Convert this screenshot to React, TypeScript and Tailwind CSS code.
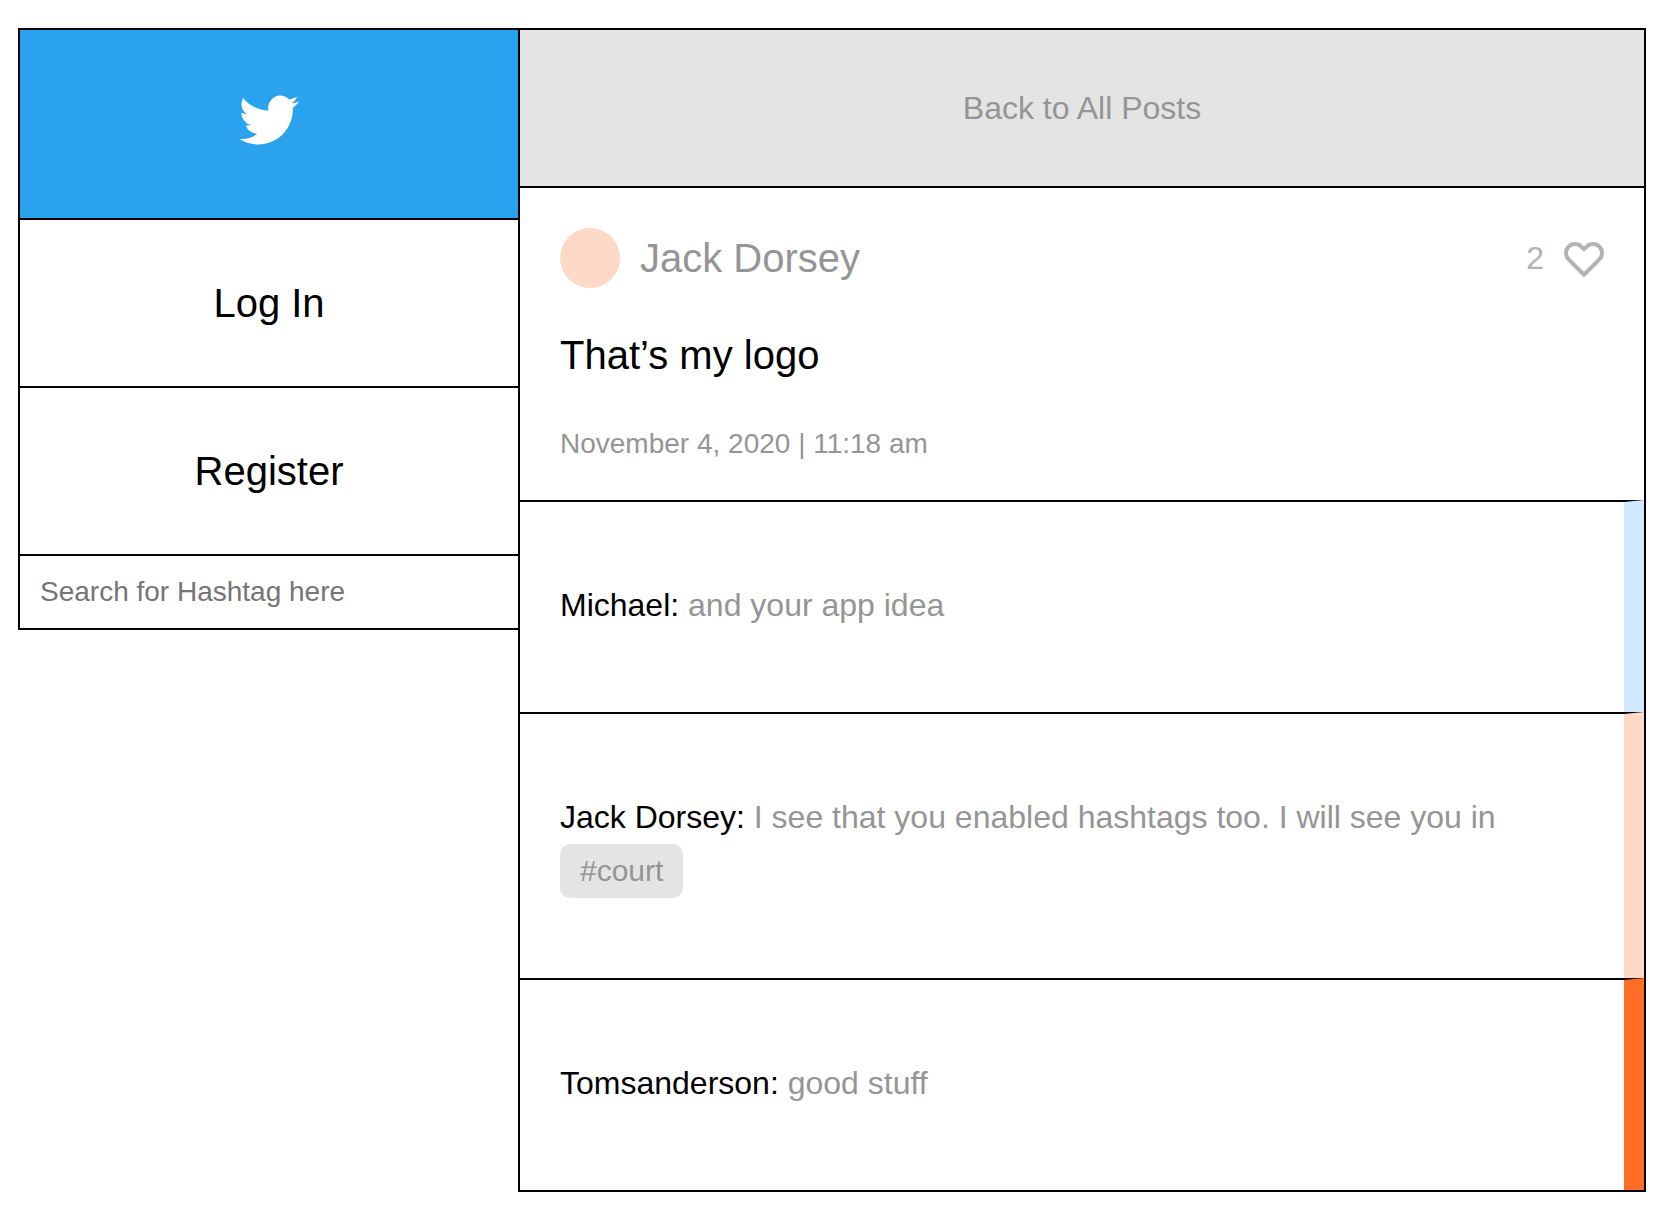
import type { ReactNode } from "react";

const comments: { author: string; body: ReactNode; accent: string }[] = [
  { author: "Michael", body: "and your app idea", accent: "border-r-[#d1e9ff]" },
  {
    author: "Jack Dorsey",
    body: (
      <>
        I see that you enabled hashtags too. I will see you in{" "}
        <a
          href="#court"
          className="mt-1 inline-block rounded-[10px] bg-[#e4e4e4] px-5 py-[10px] align-top text-[30px] leading-[34px]"
        >
          #court
        </a>
      </>
    ),
    accent: "border-r-[#ffd9c7]",
  },
  { author: "Tomsanderson", body: "good stuff", accent: "border-r-[#ff6d24]" },
];

function Bird() {
  return (
    <svg viewBox="0 0 24 24" className="h-[60px] w-[60px]" fill="#fff" aria-hidden="true">
      <path d="M23.953 4.57a10 10 0 01-2.825.775 4.958 4.958 0 002.163-2.723c-.951.555-2.005.959-3.127 1.184a4.92 4.92 0 00-8.384 4.482C7.69 8.095 4.067 6.13 1.64 3.162a4.822 4.822 0 00-.666 2.475c0 1.71.87 3.213 2.188 4.096a4.904 4.904 0 01-2.228-.616v.06a4.923 4.923 0 003.946 4.827 4.996 4.996 0 01-2.212.085 4.936 4.936 0 004.604 3.417 9.867 9.867 0 01-6.102 2.105c-.39 0-.779-.023-1.17-.067a13.995 13.995 0 007.557 2.209c9.053 0 13.998-7.496 13.998-13.985 0-.21 0-.42-.015-.63A9.935 9.935 0 0024 4.59z" />
    </svg>
  );
}

function Heart() {
  return (
    <svg
      viewBox="2 2 20 20"
      className="h-10 w-10"
      fill="none"
      stroke="currentColor"
      strokeWidth="2"
      strokeLinecap="round"
      strokeLinejoin="round"
      aria-hidden="true"
    >
      <path d="M4.318 6.318a4.5 4.5 0 000 6.364L12 20.364l7.682-7.682a4.5 4.5 0 00-6.364-6.364L12 7.636l-1.318-1.318a4.5 4.5 0 00-6.364 0z" />
    </svg>
  );
}

export default function App() {
  return (
    <div className="min-h-screen bg-white pt-7 pr-7 pb-6 pl-[18px] font-['Liberation_Sans',Arial,sans-serif] text-black">
      <div className="grid grid-cols-[125fr_282fr] items-start">
        <aside className="border-y-2 border-l-2 border-black">
          <a
            href="#home"
            aria-label="Home"
            className="flex justify-center border-b-2 border-black bg-[#2aa3ef] pt-[60px] pb-[68px]"
          >
            <Bird />
          </a>
          <nav className="text-center text-[40px] leading-[46px]">
            <a href="#login" className="block border-b-2 border-black py-[60px]">
              Log In
            </a>
            <a href="#register" className="block border-b-2 border-black py-[60px]">
              Register
            </a>
          </nav>
          <input
            type="search"
            aria-label="Search for Hashtag here"
            placeholder="Search for Hashtag here"
            className="block h-[72px] w-full px-5 text-[28px] leading-8 outline-none placeholder:text-[#757575]"
          />
        </aside>

        <main className="border-2 border-black">
          <a
            href="#posts"
            className="block bg-[#e4e4e4] py-[60px] text-center text-[32px] leading-9 text-[#959595]"
          >
            Back to All Posts
          </a>
          <article className="border-t-2 border-black p-10">
            <header className="flex items-center justify-between">
              <div className="flex items-center gap-5">
                <span className="h-[60px] w-[60px] rounded-full bg-[#ffd9c7]" />
                <h2 className="text-[40px] leading-[46px] text-[#959595]">Jack Dorsey</h2>
              </div>
              <button
                type="button"
                aria-label="2 likes"
                className="flex items-center gap-5 text-[32px] leading-9 text-[#b3b3b3]"
              >
                <span>2</span>
                <Heart />
              </button>
            </header>
            <p className="mt-[44px] text-[40px] leading-[46px]">That’s my logo</p>
            <p className="mt-[50px] text-[28px] leading-8 text-[#959595]">
              November 4, 2020 | 11:18 am
            </p>
          </article>
          {comments.map((c) => (
            <div
              key={c.author}
              className={`min-h-[212px] border-t-2 border-r-[20px] border-t-black py-20 pr-10 pl-10 text-[32px] leading-[46px] ${c.accent}`}
            >
              {c.author}: <span className="text-[#959595]">{c.body}</span>
            </div>
          ))}
        </main>
      </div>
    </div>
  );
}
